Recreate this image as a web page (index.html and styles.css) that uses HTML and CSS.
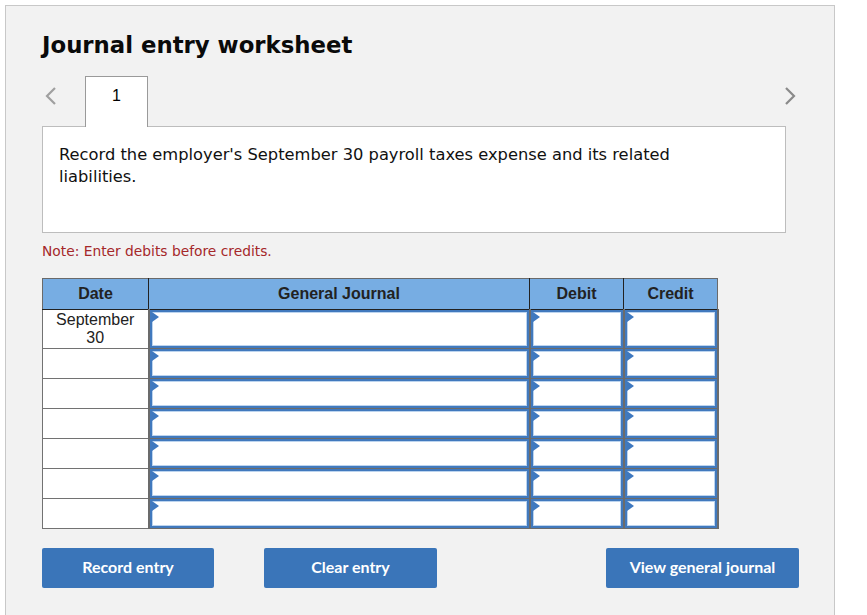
FILE: index.html
```html
<!DOCTYPE html>
<html>
<head>
<meta charset="utf-8">
<link rel="stylesheet" href="styles.css">
</head>
<body>
<div class="panel">
  <h1 class="title">Journal entry worksheet</h1>
  <div class="tabs">
    <span class="arrow arrow-left"><svg width="14" height="20" viewBox="0 0 14 20"><path d="M11 2 L3 10 L11 18" fill="none" stroke="#a0a0a0" stroke-width="2.2"/></svg></span>
    <div class="tab">1</div>
    <span class="arrow arrow-right"><svg width="14" height="20" viewBox="0 0 14 20"><path d="M3 2 L11 10 L3 18" fill="none" stroke="#8a8a8a" stroke-width="2.2"/></svg></span>
  </div>
  <div class="desc">Record the employer's September 30 payroll taxes expense and its related liabilities.</div>
  <p class="note">Note: Enter debits before credits.</p>
  <table class="journal">
    <thead>
      <tr><th class="c-date">Date</th><th class="c-gj">General Journal</th><th class="c-amt">Debit</th><th class="c-amt">Credit</th></tr>
    </thead>
    <tbody>
      <tr class="first"><td class="date">September<br>30</td><td class="in"><div class="box"></div></td><td class="in"><div class="box"></div></td><td class="in"><div class="box"></div></td></tr>
      <tr><td class="date"></td><td class="in"><div class="box"></div></td><td class="in"><div class="box"></div></td><td class="in"><div class="box"></div></td></tr>
      <tr><td class="date"></td><td class="in"><div class="box"></div></td><td class="in"><div class="box"></div></td><td class="in"><div class="box"></div></td></tr>
      <tr><td class="date"></td><td class="in"><div class="box"></div></td><td class="in"><div class="box"></div></td><td class="in"><div class="box"></div></td></tr>
      <tr><td class="date"></td><td class="in"><div class="box"></div></td><td class="in"><div class="box"></div></td><td class="in"><div class="box"></div></td></tr>
      <tr><td class="date"></td><td class="in"><div class="box"></div></td><td class="in"><div class="box"></div></td><td class="in"><div class="box"></div></td></tr>
      <tr><td class="date"></td><td class="in"><div class="box"></div></td><td class="in"><div class="box"></div></td><td class="in"><div class="box"></div></td></tr>
    </tbody>
  </table>
  <div class="buttons">
    <button class="btn btn-record">Record entry</button>
    <button class="btn btn-clear">Clear entry</button>
    <button class="btn btn-view">View general journal</button>
  </div>
</div>
</body>
</html>
```
FILE: styles.css
```css
html, body { margin: 0; padding: 0; background: #fff; }
.panel {
  margin: 5px 0 0 5px;
  width: 830px;
  height: 640px;
  border: 1px solid #c8c8c8;
  background: #f2f2f2;
  padding: 0 0 0 36px;
  box-sizing: border-box;
  font-family: "DejaVu Sans", Verdana, sans-serif;
}
.title {
  margin: 0;
  padding-top: 25px;
  font-size: 22.8px;
  line-height: 28px;
  font-weight: bold;
  color: #0a0a0a;
}
.tabs {
  margin-top: 17px;
  display: flex;
  align-items: flex-start;
  width: 755px;
  height: 50px;
  position: relative;
}
.arrow { display: block; height: 20px; }
.arrow-left { margin: 10px 0 0 2px; }
.arrow-right { margin: 10px 0 0 auto; }
.tab {
  margin-left: 27px;
  width: 63px;
  height: 51px;
  box-sizing: border-box;
  border: 1px solid #9a9a9a;
  border-bottom: none;
  background: #fff;
  font-family: "Liberation Sans", Arial, sans-serif;
  font-size: 16px;
  text-align: center;
  padding-top: 10px;
  position: relative;
  z-index: 1;
}
.desc {
  width: 744px;
  height: 107px;
  box-sizing: border-box;
  border: 1px solid #bdbdbd;
  background: #fff;
  padding: 17px 90px 0 16px;
  font-size: 16.3px;
  line-height: 22px;
  color: #111;
}
.note {
  margin: 10px 0 0 0;
  font-size: 13.8px;
  line-height: 16px;
  color: #a5282a;
}
.journal {
  margin-top: 19px;
  border-collapse: collapse;
  font-family: "Liberation Sans", Arial, sans-serif;
}
.journal th {
  background: #77ade3;
  border: 1px solid #222;
  border-top-color: #6a6a6a;
  height: 30px;
  padding: 0;
  font-size: 16px;
  font-weight: bold;
  color: #222;
}
.journal th:first-child { border-left-color: #6a6a6a; }
.journal th:last-child { border-right-color: #6a6a6a; }
.c-date { width: 105px; }
.c-gj { width: 380px; }
.c-amt { width: 93px; }
.journal td {
  border: 1px solid #727272;
  padding: 0;
  height: 28px;
  background: #fff;
}
.journal tr.first td { height: 37px; }
.journal td.date {
  text-align: center;
  vertical-align: top;
  font-size: 16px;
  line-height: 18px;
  color: #222;
  padding-top: 1px;
}
.journal td.in {
  border-width: 1px 2px;
  border-color: #6b6b6b;
  position: relative;
}
.box {
  position: absolute;
  inset: 0;
  border: 2px solid #4179bd;
  box-shadow: inset 0 0 0 1px #bcd4ef;
  background: #fff;
}
.box::before {
  content: "";
  position: absolute;
  left: 0;
  top: 0;
  border-left: 7px solid #3e78bf;
  border-top: 5px solid transparent;
  border-bottom: 5px solid transparent;
}
.buttons {
  margin-top: 19px;
  display: flex;
  width: 757px;
}
.btn {
  height: 40px;
  border: none;
  border-radius: 2px;
  background: #3a75b9;
  color: #fff;
  font-family: Lato, "Open Sans", sans-serif;
  font-weight: bold;
  font-size: 16px;
  padding: 0 0 4px 0;
}
.btn-record { width: 172px; }
.btn-clear { width: 173px; margin-left: 50px; }
.btn-view { width: 193px; margin-left: auto; }
```
